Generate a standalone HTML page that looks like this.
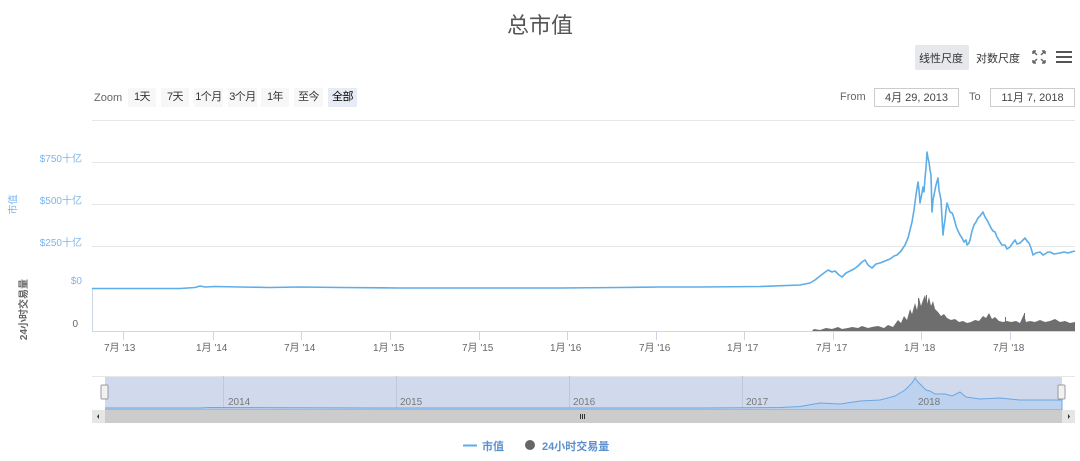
<!DOCTYPE html>
<html><head><meta charset="utf-8"><style>
body{margin:0;width:1080px;height:461px;background:#fff;font-family:"Liberation Sans","Noto Sans CJK SC",sans-serif;position:relative;overflow:hidden}
.a{position:absolute;white-space:nowrap}
.btn{position:absolute;top:88px;height:19px;line-height:19px;font-size:11px;color:#333;background:#f7f7f7;text-align:center;white-space:nowrap;letter-spacing:-0.5px;overflow:visible}
.inp{position:absolute;top:88px;height:19px;line-height:19px;border:1px solid #ccc;font-size:11px;color:#444;text-align:center;box-sizing:border-box}
</style></head><body>
<div class="a" style="left:0;width:1080px;top:8px;text-align:center;font-size:22px;color:#555">总市值</div>
<div class="a" style="left:915px;top:45px;width:54px;height:25px;background:#e6e8ec;border-radius:2px"></div>
<div class="a" style="left:919px;top:50px;font-size:11px;color:#333">线性尺度</div>
<div class="a" style="left:976px;top:50px;font-size:11px;color:#333">对数尺度</div>
<svg class="a" style="left:1032px;top:50px" width="14" height="14" viewBox="0 0 14 14" fill="none" stroke="#666" stroke-width="1.5"><path d="M1 1l4 4M1 1h3M1 1v3M13 1l-4 4M13 1h-3M13 1v3M1 13l4-4M1 13h3M1 13v-3M13 13l-4-4M13 13h-3M13 13v-3"/></svg>
<div class="a" style="left:1056px;top:51px;width:16px;height:2px;background:#555;box-shadow:0 5px 0 #555,0 10px 0 #555"></div>

<div class="a" style="left:94px;top:92px;font-size:11px;color:#666">Zoom</div>
<div class="btn" style="left:128px;width:28px">1天</div>
<div class="btn" style="left:161px;width:28px">7天</div>
<div class="btn" style="left:194px;width:29px">1个月</div>
<div class="btn" style="left:228px;width:29px">3个月</div>
<div class="btn" style="left:261px;width:28px">1年</div>
<div class="btn" style="left:294px;width:29px">至今</div>
<div class="btn" style="left:328px;width:29px;background:#e6ebf5;color:#000">全部</div>
<div class="a" style="left:840px;top:91px;font-size:11px;color:#666">From</div>
<div class="inp" style="left:874px;width:85px">4月 29, 2013</div>
<div class="a" style="left:969px;top:91px;font-size:11px;color:#666">To</div>
<div class="inp" style="left:990px;width:85px">11月 7, 2018</div>

<div class="a" style="left:34px;top:150px;width:48px;text-align:right;font-size:10px;color:#7cb5ec">$750十亿</div>
<div class="a" style="left:34px;top:192px;width:48px;text-align:right;font-size:10px;color:#7cb5ec">$500十亿</div>
<div class="a" style="left:34px;top:234px;width:48px;text-align:right;font-size:10px;color:#7cb5ec">$250十亿</div>
<div class="a" style="left:34px;top:276px;width:48px;text-align:right;font-size:10px;color:#7cb5ec">$0</div>
<div class="a" style="left:34px;top:319px;width:44px;text-align:right;font-size:10px;color:#666">0</div>
<div class="a" style="left:2px;top:197px;transform:rotate(-90deg);font-size:10px;color:#7cb5ec">市值</div>
<div class="a" style="left:-8px;top:302px;transform:rotate(-90deg);font-size:10px;color:#666;font-weight:bold">24小时交易量</div>

<svg class="a" style="left:0;top:0" width="1080" height="461">
<g stroke="#e6e6e6" stroke-width="1">
<path d="M92 120.5H1075M92 162.5H1075M92 204.5H1075M92 246.5H1075"/>
</g>
<path d="M92.5 289V331M92 331.5H1075" stroke="#ccd6eb"/>
<g stroke="#ccd6eb"><path d="M123.5 331v9M213.5 331v9M301.5 331v9M390.5 331v9M479.5 331v9M567.5 331v9M656.5 331v9M744.5 331v9M833.5 331v9M921.5 331v9M1010.5 331v9"/></g>
<polygon fill="#6e6e6e" points="812,331 814,329 820,330 826,328 832,329 838,327 842,329 848,328 852,327 858,328 862,326 868,328 872,327 878,326 884,328 888,325 893,327 898,320 901,323 904,316 907,320 910,309 912,314 915,303 917,310 919,298 921,306 923,300 925,295 927,304 929,297 931,306 933,301 935,309 938,312 941,316 944,314 947,318 951,320 955,319 959,322 963,321 967,323 971,322 975,320 979,321 983,316 986,318 989,313 992,319 995,317 999,321 1003,322 1007,321 1011,322 1016,321 1020,323 1024,314 1026,322 1030,321 1035,322 1040,320 1045,322 1050,321 1055,319 1060,322 1065,321 1070,323 1075,322 1075,331"/>
<g stroke="#6e6e6e" stroke-width="1"><path d="M918.5 331V298M926.5 331V295M1024.5 331V313M1005.5 331V317"/></g>
<polyline fill="none" stroke="#5dade8" stroke-width="1.6" stroke-linejoin="round" points="92,288.5 180,288.5 195,287.5 200,286 205,287 215,286.5 240,287 270,287.5 300,287 340,287.5 400,288 480,288 560,288 620,287.5 660,287 700,287 760,286.5 800,285 810,283 815,280 820,276 824,273 828,270 832,272 835,271 839,275 842,277 846,273 850,271 854,269 858,266 862,262 865,260 868,265 872,268 876,264 880,263 885,261 890,259 894,256 897,255 901,251 905,245 908,238 910,230 912,222 914,210 916,195 918,182 919,190 920,203 921,198 923,187 924,192 925,178 926,168 927,152 928,158 929,162 930,170 931,175 932,212 933,200 935,190 936,185 938,178 939,190 941,200 942,218 943,235 944,226 945,220 946,210 947,203 949,209 950,212 952,213 953,215 955,222 956,226 958,231 960,235 962,238 964,242 966,240 967,245 969,243 970,240 972,231 974,225 976,222 978,218 980,216 983,212 985,217 987,220 989,224 991,228 993,231 995,232 997,237 1000,242 1002,245 1005,245 1007,249 1010,247 1012,244 1015,240 1017,244 1020,243 1022,241 1025,238 1027,241 1029,243 1031,248 1033,255 1036,253 1040,252 1043,255 1045,254 1048,252 1050,252 1054,254 1060,253 1064,252 1068,253 1071,252 1075,251"/>
<rect x="105" y="376" width="957" height="34" fill="#ccd6eb" opacity="0.9"/>
<path d="M92 376.5H1075" stroke="#e6e6e6"/>
<g stroke="#c0c8d8"><path d="M223.5 376v34M396.5 376v34M569.5 376v34M742.5 376v34M915.5 376v34"/></g>
<polyline fill="#bcd2ee" stroke="#6ba6e0" stroke-width="1" points="105,408 200,408 210,407.5 400,408 700,408 780,407.5 800,406.5 820,403 840,404 860,401 880,400 895,396 905,390 912,383 915,378 918,382 922,386 926,390 930,391 935,394 945,394 952,396 960,392 966,397 980,399 1000,398 1020,400 1040,400 1062,400 1062,410 105,410"/>
<rect x="101" y="385" width="7" height="14" rx="1" fill="#f2f2f2" stroke="#999"/>
<rect x="1058" y="385" width="7" height="14" rx="1" fill="#f2f2f2" stroke="#999"/>
<rect x="92" y="410" width="983" height="13" fill="#ccc"/>
<rect x="92" y="410" width="13" height="13" fill="#e6e6e6"/>
<rect x="1062" y="410" width="13" height="13" fill="#e6e6e6"/>
<path d="M99 414l-2 2.5 2 2.5zM1068 414l2 2.5-2 2.5z" fill="#333"/>
<path d="M580.5 414v5M582.5 414v5M584.5 414v5" stroke="#333"/>
<path d="M463 445.5h14" stroke="#5dade8" stroke-width="2"/>
<circle cx="530" cy="445" r="5" fill="#666"/>
</svg>
<div class="a" style="left:228px;top:397px;font-size:10px;color:#777">2014</div>
<div class="a" style="left:400px;top:397px;font-size:10px;color:#777">2015</div>
<div class="a" style="left:573px;top:397px;font-size:10px;color:#777">2016</div>
<div class="a" style="left:746px;top:397px;font-size:10px;color:#777">2017</div>
<div class="a" style="left:918px;top:397px;font-size:10px;color:#777">2018</div>
<div class="a" style="left:482px;top:438px;font-size:11px;color:#5a8fcf;font-weight:bold">市值</div>
<div class="a" style="left:542px;top:438px;font-size:11px;color:#5a8fcf;font-weight:bold">24小时交易量</div>
<div class="a" style="left:104px;top:339px;font-size:10px;color:#666">7月 '13</div>
<div class="a" style="left:196px;top:339px;font-size:10px;color:#666">1月 '14</div>
<div class="a" style="left:284px;top:339px;font-size:10px;color:#666">7月 '14</div>
<div class="a" style="left:373px;top:339px;font-size:10px;color:#666">1月 '15</div>
<div class="a" style="left:462px;top:339px;font-size:10px;color:#666">7月 '15</div>
<div class="a" style="left:550px;top:339px;font-size:10px;color:#666">1月 '16</div>
<div class="a" style="left:639px;top:339px;font-size:10px;color:#666">7月 '16</div>
<div class="a" style="left:727px;top:339px;font-size:10px;color:#666">1月 '17</div>
<div class="a" style="left:816px;top:339px;font-size:10px;color:#666">7月 '17</div>
<div class="a" style="left:904px;top:339px;font-size:10px;color:#666">1月 '18</div>
<div class="a" style="left:993px;top:339px;font-size:10px;color:#666">7月 '18</div>
</body></html>
